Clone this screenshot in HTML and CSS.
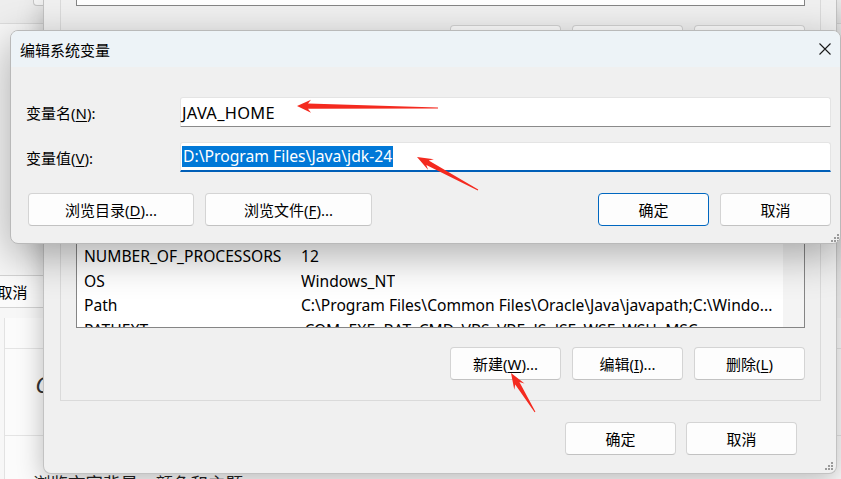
FILE: index.html
```html
<!DOCTYPE html>
<html lang="zh-CN">
<head>
<meta charset="utf-8">
<title>编辑系统变量</title>
<link rel="stylesheet" href="styles.css">
</head>
<body>
<div class="desk">
  <div class="bgwin">
    <div class="bg-top"><div class="bg-topbtn"></div></div>
    <div class="bg-mid"><div class="bg-cancel">取消</div></div>
    <div class="bg-panel">
      <div class="bg-cell bg-cell-1"></div>
      <div class="bg-cell bg-cell-2"><span class="bg-c">C</span></div>
      <div class="bg-cell bg-cell-3">浏览市容背景、颜色和主题</div>
    </div>
  </div>

  <div class="envwin">
    <div class="group">
      <div class="list-top"></div>
      <div class="btnrow btnrow-1">
        <div class="btn">新建(<u>N</u>)...</div>
        <div class="btn">编辑(<u>E</u>)...</div>
        <div class="btn">删除(<u>D</u>)</div>
      </div>
      <div class="list-sys">
        <div class="rows-area">
          <div class="rows">
            <div class="row"><span class="c1">ComSpec</span><span class="c2">C:\Windows\system32\cmd.exe</span></div>
            <div class="row"><span class="c1">DriverData</span><span class="c2">C:\Windows\System32\Drivers\DriverData</span></div>
            <div class="row"><span class="c1">NUMBER_OF_PROCESSORS</span><span class="c2">12</span></div>
            <div class="row"><span class="c1">OS</span><span class="c2">Windows_NT</span></div>
            <div class="row"><span class="c1">Path</span><span class="c2">C:\Program Files\Common Files\Oracle\Java\javapath;C:\Windo...</span></div>
            <div class="row"><span class="c1">PATHEXT</span><span class="c2">.COM;.EXE;.BAT;.CMD;.VBS;.VBE;.JS;.JSE;.WSF;.WSH;.MSC</span></div>
          </div>
        </div>
        <div class="scroll"></div>
      </div>
      <div class="btnrow btnrow-2">
        <div class="btn">新建(<u>W</u>)...</div>
        <div class="btn">编辑(<u>I</u>)...</div>
        <div class="btn">删除(<u>L</u>)</div>
      </div>
    </div>
    <div class="footer">
      <div class="btn">确定</div>
      <div class="btn">取消</div>
    </div>
    <svg class="grip grip-env" width="10" height="10" viewBox="0 0 10 10">
      <rect x="7" y="1" width="2" height="2"/><rect x="7" y="4" width="2" height="2"/><rect x="4" y="4" width="2" height="2"/>
      <rect x="7" y="7" width="2" height="2"/><rect x="4" y="7" width="2" height="2"/><rect x="1" y="7" width="2" height="2"/>
    </svg>
  </div>

  <div class="dialog">
    <div class="titlebar">
      <span class="title">编辑系统变量</span>
      <svg class="close" width="12" height="12" viewBox="0 0 12 12">
        <path d="M0.5 0.5 L11.5 11.5 M11.5 0.5 L0.5 11.5" stroke="#1a1a1a" stroke-width="1.1" fill="none"/>
      </svg>
    </div>
    <div class="dbody">
      <div class="field">
        <span class="label">变量名(<u>N</u>):</span>
        <div class="input input-name">JAVA_HOME</div>
      </div>
      <div class="field field-2">
        <span class="label">变量值(<u>V</u>):</span>
        <div class="input focus"><span class="sel">D:\Program Files\Java\jdk-24</span></div>
      </div>
      <div class="dbtns">
        <div class="dbtns-left">
          <div class="btn btn-wide">浏览目录(<u>D</u>)...</div>
          <div class="btn btn-wide2">浏览文件(<u>F</u>)...</div>
        </div>
        <div class="dbtns-right">
          <div class="btn btn-default">确定</div>
          <div class="btn">取消</div>
        </div>
      </div>
    </div>
    <svg class="grip grip-dlg" width="10" height="10" viewBox="0 0 10 10">
      <rect x="7" y="1" width="2" height="2"/><rect x="7" y="4" width="2" height="2"/><rect x="4" y="4" width="2" height="2"/>
      <rect x="7" y="7" width="2" height="2"/><rect x="4" y="7" width="2" height="2"/><rect x="1" y="7" width="2" height="2"/>
    </svg>
  </div>

  <svg class="arrows" width="841" height="479" viewBox="0 0 841 479">
    <polygon points="297,106 311,99.7 308,103.6 438,107.5 438,108.5 308,108.7 311,112.7"/>
    <polygon points="417,157 433.9,159.3 428.7,160.5 478.2,189.6 477.8,190.4 426.3,164.9 428.2,169.9"/>
    <polygon points="511,373 524.5,383.5 519.4,381.9 535.4,411.7 534.6,412.3 515.2,384.5 514.3,389.8"/>
  </svg>
</div>
</body>
</html>
```

FILE: styles.css
```css
* { box-sizing: border-box; }
html, body { margin: 0; padding: 0; }
body {
  width: 841px;
  height: 479px;
  overflow: hidden;
  font-family: "Noto Sans", "Noto Sans CJK SC", sans-serif;
  font-size: 15px;
  color: #000;
  background: #f3f3f3;
}
u { text-decoration: underline; text-underline-offset: 2px; text-decoration-thickness: 1px; }

.desk { position: relative; width: 841px; height: 479px; overflow: hidden; }

/* background settings window */
.bgwin {
  position: absolute; left: 0; top: 0; width: 841px; height: 479px;
  background: #f7f7f7;
  display: flex; flex-direction: column;
}
.bg-top { height: 24px; flex: none; border-bottom: 1px solid #dcdcdc; background: #eeeeee; }
.bg-topbtn {
  margin-left: 33px; width: 40px; height: 6px;
  border: 1px solid #c9c9c9; border-top: none; border-radius: 0 0 0 4px; background: #f8f8f8;
}
.bg-mid { height: 294px; flex: none; padding-top: 251px; }
.bg-cancel {
  margin-left: -43px; width: 111px; height: 33px;
  border: 1px solid #d3d3d3; border-radius: 4px; background: #fbfbfb;
  display: flex; align-items: center; justify-content: center;
  font-size: 15px;
}
.bg-panel { flex: 1; min-height: 0; margin-left: 4px; border-left: 1px solid #e2e2e2; background: #fbfbfb; display: flex; flex-direction: column; overflow: hidden; }
.bg-cell { border-bottom: 1px solid #e4e4e4; flex: none; }
.bg-cell-1 { height: 31px; }
.bg-cell-2 { height: 87px; padding: 25px 0 0 31px; }
.bg-c { font-family: "DejaVu Sans", sans-serif; font-style: italic; font-size: 21px; line-height: 24px; color: #333; }
.bg-cell-3 { height: 70px; border-bottom: none; padding: 37px 0 0 28px; font-size: 17.5px; line-height: 20px; white-space: nowrap; color: #222; }

/* environment variables window */
.envwin {
  position: absolute; left: 43px; top: 0; width: 794px; height: 474px;
  background: #f0f0f0;
  border: 1px solid #c2c2c2; border-top: none;
  border-radius: 0 0 8px 8px;
  box-shadow: 0 6px 26px rgba(0,0,0,.26);
  display: flex; flex-direction: column;
}
.group {
  margin: 0 15px 0 16px;
  border: 1px solid #dadada; border-top: none;
  padding: 0 15px 20px 15px;
}
.list-top { height: 6px; background: #fff; border: 1px solid #858585; border-top: none; }
.btnrow { display: flex; justify-content: flex-end; gap: 11px; }
.btnrow-1 { margin-top: 19px; }
.btnrow-2 { margin-top: 19px; }
.list-sys {
  margin-top: 12px; height: 258px;
  background: #fff; border: 1px solid #858585;
  display: flex;
}
.rows-area { flex: 1; overflow: hidden; display: flex; flex-direction: column; justify-content: flex-end; }
.rows { margin-bottom: -15px; }
.row { height: 24.5px; display: flex; align-items: center; white-space: nowrap; font-size: 15.6px; }
.c1 { width: 224px; flex: none; padding-left: 7px; }
.c2 { overflow: hidden; }
.scroll { width: 21px; background: #f4f4f4; }

.btn {
  width: 111px; height: 33px; flex: none;
  background: #fdfdfd;
  border: 1px solid #d4d4d4; border-bottom-color: #c2c2c2;
  border-radius: 4px;
  display: flex; align-items: center; justify-content: center;
  font-size: 15px; white-space: nowrap;
}
.footer { display: flex; justify-content: flex-end; gap: 10px; margin-top: 21px; padding-right: 39px; }

.grip { position: absolute; fill: #9a9a9a; }
.grip-env { right: 2px; bottom: 2px; }
.grip-dlg { right: 0px; bottom: 0px; }

/* edit dialog */
.dialog {
  position: absolute; left: 10px; top: 30px; width: 831px; height: 214px;
  background: #f0f0f0;
  border: 1px solid #b9b9b9;
  border-radius: 8px;
  box-shadow: 0 12px 42px rgba(0,0,0,.32);
  display: flex; flex-direction: column;
  overflow: hidden;
}
.titlebar {
  height: 36px; flex: none;
  background: #edf3f7;
  display: flex; align-items: center; justify-content: space-between;
  padding: 0 9px 0 9px;
}
.title { font-size: 15px; }
.close { display: block; }
.dbody { padding: 30px 9px 0 15px; }
.field { display: grid; grid-template-columns: 154px 1fr; align-items: center; height: 30px; }
.field-2 { margin-top: 15px; }
.label { font-size: 15px; }
.input {
  height: 30px; background: #fff;
  border: 1px solid #e4e4e4; border-bottom-color: #8a8a8a;
  border-radius: 3px 3px 0 0;
  padding-left: 1px;
  display: flex; align-items: center;
  white-space: nowrap;
  font-size: 15.7px;
}
.input-name { font-size: 16.4px; letter-spacing: 0.3px; }
.input.focus { border-bottom: 2px solid #005fb8; }
.sel { background: #0078d7; color: #fff; line-height: 21px; padding: 0 1px; }
.dbtns { display: flex; justify-content: space-between; margin-top: 21px; padding-left: 2px; }
.dbtns-left, .dbtns-right { display: flex; gap: 11px; }
.btn-wide { width: 166px; }
.btn-wide2 { width: 167px; }
.btn-default { border: 1px solid #0067c0; }

.arrows { position: absolute; left: 0; top: 0; fill: #f42a1f; pointer-events: none; }
```
